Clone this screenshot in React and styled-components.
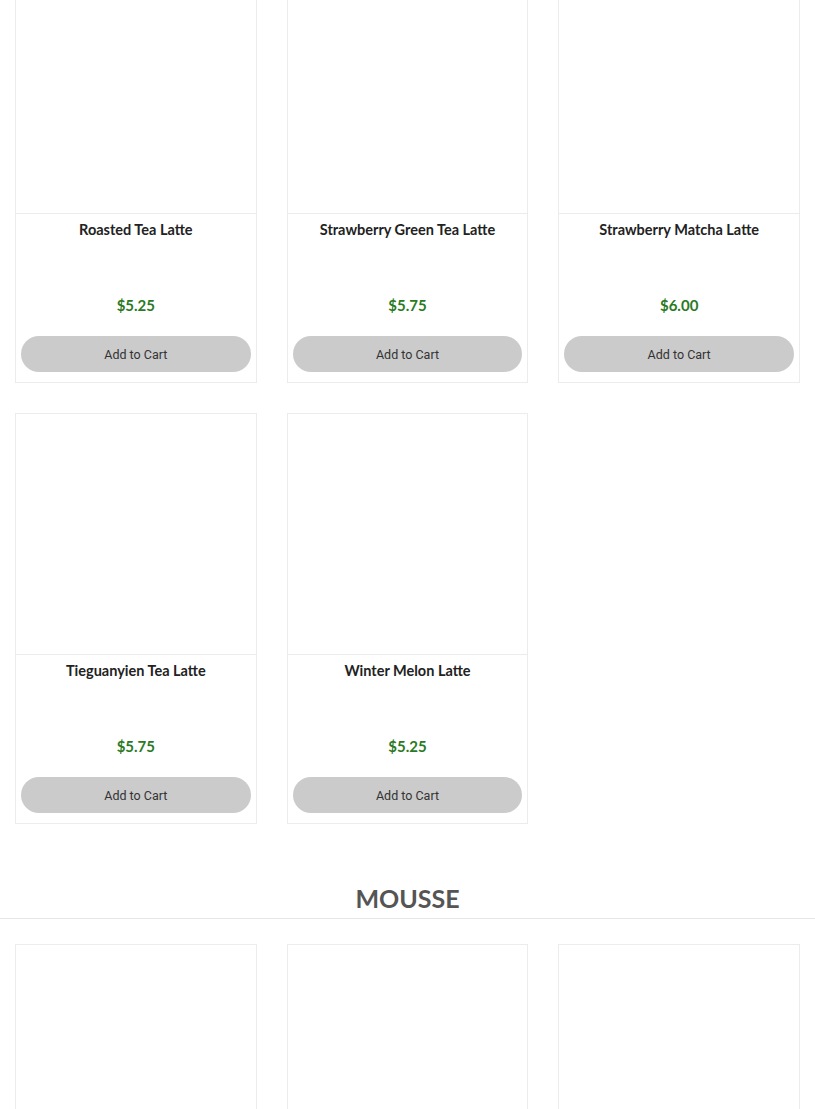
import React from 'react'
import styled, { createGlobalStyle } from 'styled-components'

const GlobalStyle = createGlobalStyle`
  html, body {
    margin: 0;
    padding: 0;
    background: #fff;
    overflow: hidden;
  }
  * { box-sizing: border-box; }
`

const Page = styled.div`
  margin-top: -28px;
  font-family: Lato, "Open Sans", sans-serif;
`
const Grid = styled.div`
  display: grid;
  grid-template-columns: repeat(3, 1fr);
  gap: 30px;
  padding: 0 15px;
`
const Card = styled.div`
  display: flex;
  flex-direction: column;
  border: 1px solid #ececec;
  background: #fff;
`
const Photo = styled.div`
  height: 241px;
  background: #fff;
  border-bottom: 1px solid #ececec;
`
const Info = styled.div`
  display: flex;
  flex-direction: column;
  align-items: center;
  padding: 7px 5px 10px;
`
const Title = styled.div`
  height: 74px;
  font-size: 14.5px;
  line-height: 18px;
  font-weight: 700;
  color: #222;
  text-align: center;
`
const Price = styled.div`
  font-size: 15px;
  line-height: 20px;
  font-weight: 700;
  color: #2b7a1f;
`
const CartButton = styled.button`
  margin-top: 21px;
  width: 100%;
  height: 36px;
  border: none;
  border-radius: 18px;
  background: #cbcbcb;
  color: #333;
  font-family: Roboto, "Liberation Sans", sans-serif;
  font-size: 12.5px;
  cursor: pointer;
`
const Section = styled.section`
  margin-top: 59px;
`
const Heading = styled.h2`
  margin: 0 0 25px;
  padding-bottom: 5px;
  border-bottom: 1px solid #e6e6e6;
  text-align: center;
  font-size: 25px;
  line-height: 30px;
  font-weight: 700;
  color: #555;
`

const lattes = [
  { name: 'Roasted Tea Latte', price: '$5.25' },
  { name: 'Strawberry Green Tea Latte', price: '$5.75' },
  { name: 'Strawberry Matcha Latte', price: '$6.00' },
  { name: 'Tieguanyien Tea Latte', price: '$5.75' },
  { name: 'Winter Melon Latte', price: '$5.25' },
]

const Product = ({ name, price }) => (
  <Card>
    <Photo />
    <Info>
      <Title>{name}</Title>
      <Price>{price}</Price>
      <CartButton>Add to Cart</CartButton>
    </Info>
  </Card>
)

export default function App() {
  return (
    <Page>
      <GlobalStyle />
      <Grid>
        {lattes.map(item => <Product key={item.name} {...item} />)}
      </Grid>

      <Section>
        <Heading>MOUSSE</Heading>
        <Grid>
          <Card><Photo /></Card>
          <Card><Photo /></Card>
          <Card><Photo /></Card>
        </Grid>
      </Section>
    </Page>
  )
}
